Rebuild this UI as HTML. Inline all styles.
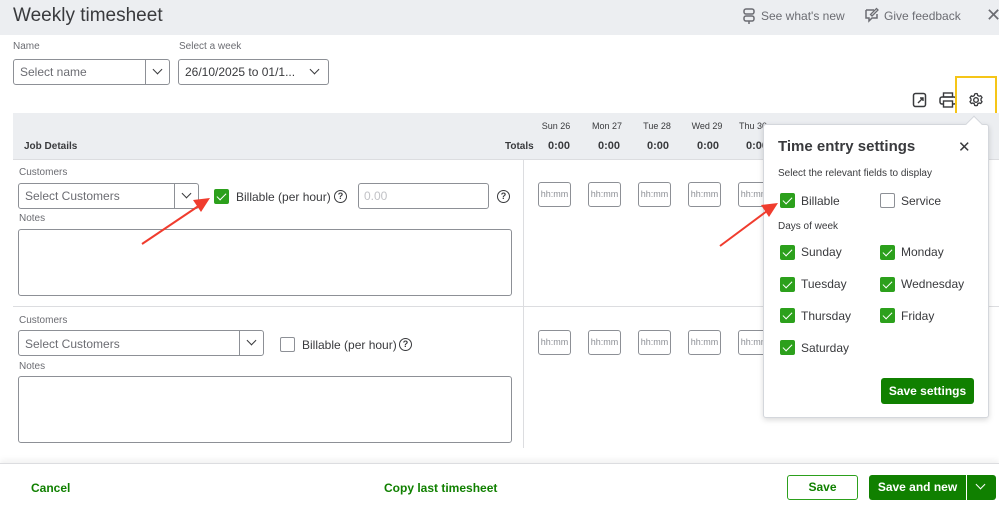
<!DOCTYPE html>
<html><head><meta charset="utf-8"><style>
*{box-sizing:border-box;margin:0;padding:0}
body{width:999px;height:508px;position:relative;overflow:hidden;background:#fff;font-family:"Liberation Sans",sans-serif;color:#393a3d}
.a{position:absolute}
.lbl{font-size:10px;color:#6b6c72}
.box{position:absolute;border:1px solid #8d9096;border-radius:3px;background:#fff}
.cb{position:absolute;width:15px;height:15px;border-radius:2px;background:#2ca01c;border:1px solid #2ca01c}
.cb::after{content:"";position:absolute;left:4px;top:1px;width:4px;height:8px;border:solid #fff;border-width:0 1.5px 1.5px 0;transform:rotate(45deg)}
.cbe{position:absolute;width:15px;height:15px;border-radius:2px;border:1px solid #8d9096;background:#fff}
.q{position:absolute;width:13px;height:13px;border:1.5px solid #393a3d;border-radius:50%;font-size:9px;font-weight:bold;text-align:center;line-height:10px}
.t{font-size:12px;color:#393a3d}
.hh{position:absolute;width:33px;height:25px;border:1px solid #8d9096;border-radius:3px;font-size:9px;color:#8d9096;text-align:center;line-height:23px;background:#fff}
.chev{position:absolute;width:7px;height:7px;border:solid #393a3d;border-width:0 1.5px 1.5px 0;transform:rotate(45deg)}
.day{font-size:9px;color:#393a3d;text-align:center;width:40px}
.tot{font-size:11px;font-weight:bold;text-align:center;width:40px}
.pl{font-size:12px;color:#393a3d}
</style></head><body>
<div class="a" style="left:0;top:0;width:999px;height:35px;background:#eceef1"></div>
<div class="a" style="left:13px;top:5px;font-size:19px;color:#393a3d">Weekly timesheet</div>
<svg class="a" style="left:742px;top:8px" width="14" height="16" viewBox="0 0 14 16"><rect x="2" y="1" width="10" height="5" rx="2" fill="none" stroke="#6b6c72" stroke-width="1.5"/><rect x="2" y="8" width="10" height="5" rx="2" fill="none" stroke="#6b6c72" stroke-width="1.5"/><path d="M7 13v3" stroke="#6b6c72" stroke-width="1.5"/></svg>
<div class="a" style="left:761px;top:9px;font-size:12px;color:#6b6c72">See what's new</div>
<svg class="a" style="left:864px;top:7px" width="16" height="16" viewBox="0 0 16 16"><path d="M2 3h8M2 3v8h3v3l3-3h5V7" fill="none" stroke="#6b6c72" stroke-width="1.5"/><path d="M8 9l6-6-1.5-1.5-6 6z" fill="none" stroke="#6b6c72" stroke-width="1.3"/></svg>
<div class="a" style="left:884px;top:9px;font-size:12px;color:#6b6c72">Give feedback</div>
<div class="a" style="left:986px;top:5px;font-size:18px;color:#6b6c72">✕</div>

<div class="a lbl" style="left:13px;top:41px">Name</div>
<div class="a lbl" style="left:179px;top:41px">Select a week</div>
<div class="box" style="left:13px;top:59px;width:157px;height:26px"></div>
<div class="a" style="left:145px;top:60px;width:1px;height:24px;background:#8d9096"></div>
<div class="a t" style="left:20px;top:65px;color:#6b6c72">Select name</div>
<div class="chev" style="left:154px;top:66px"></div>
<div class="box" style="left:178px;top:59px;width:151px;height:26px"></div>
<div class="a t" style="left:185px;top:65px">26/10/2025 to 01/1...</div>
<div class="chev" style="left:311px;top:66px"></div>

<svg class="a" style="left:912px;top:92px" width="16" height="16" viewBox="0 0 16 16"><rect x="1.5" y="1.5" width="12" height="13" rx="2" fill="none" stroke="#393a3d" stroke-width="1.5"/><path d="M6 11l5-5M8 6h3v3" fill="none" stroke="#393a3d" stroke-width="1.4"/></svg>
<svg class="a" style="left:939px;top:92px" width="18" height="16" viewBox="0 0 18 16"><rect x="4.5" y="1" width="9" height="4" fill="none" stroke="#393a3d" stroke-width="1.4"/><rect x="1" y="5" width="16" height="7" rx="2" fill="none" stroke="#393a3d" stroke-width="1.5"/><rect x="4.5" y="9" width="9" height="6" fill="#fff" stroke="#393a3d" stroke-width="1.4"/></svg>
<svg class="a" style="left:968px;top:92px" width="16" height="16" viewBox="0 0 16 16"><circle cx="8" cy="8" r="2.3" fill="none" stroke="#393a3d" stroke-width="1.4"/><path d="M8 1.5l1.3.3.4 1.6 1.4.8 1.6-.5 1.3 1.8-1 1.3v1.6l1 1.3-1.3 1.8-1.6-.5-1.4.8-.4 1.6-1.3.3-1.3-.3-.4-1.6-1.4-.8-1.6.5-1.3-1.8 1-1.3V7l-1-1.3 1.3-1.8 1.6.5 1.4-.8.4-1.6z" fill="none" stroke="#393a3d" stroke-width="1.3"/></svg>
<div class="a" style="left:955px;top:76px;width:42px;height:48px;border:2px solid #f5c518"></div>

<div class="a" style="left:13px;top:113px;width:986px;height:46px;background:#eceef1"></div>
<div class="a" style="left:24px;top:141px;font-size:10px;font-weight:bold">Job Details</div>
<div class="a" style="left:505px;top:141px;font-size:10px;font-weight:bold">Totals</div>
<div class="a day" style="left:536px;top:121px">Sun 26</div>
<div class="a day" style="left:587px;top:121px">Mon 27</div>
<div class="a day" style="left:637px;top:121px">Tue 28</div>
<div class="a day" style="left:687px;top:121px">Wed 29</div>
<div class="a day" style="left:733px;top:121px">Thu 30</div>
<div class="a tot" style="left:539px;top:140px">0:00</div>
<div class="a tot" style="left:589px;top:140px">0:00</div>
<div class="a tot" style="left:638px;top:140px">0:00</div>
<div class="a tot" style="left:688px;top:140px">0:00</div>
<div class="a tot" style="left:737px;top:140px">0:00</div>
<div class="a" style="left:13px;top:159px;width:986px;height:1px;background:#dcdde0"></div>
<div class="a" style="left:523px;top:160px;width:1px;height:288px;background:#dcdde0"></div>
<div class="a" style="left:13px;top:306px;width:986px;height:1px;background:#dcdde0"></div>

<!-- row1 -->
<div class="a lbl" style="left:19px;top:167px">Customers</div>
<div class="box" style="left:18px;top:183px;width:181px;height:26px"></div>
<div class="a" style="left:174px;top:184px;width:1px;height:24px;background:#8d9096"></div>
<div class="a t" style="left:25px;top:189px;color:#6b6c72">Select Customers</div>
<div class="chev" style="left:183px;top:190px"></div>
<div class="cb" style="left:214px;top:189px"></div>
<div class="a t" style="left:236px;top:190px">Billable (per hour)</div>
<div class="q" style="left:334px;top:190px">?</div>
<div class="box" style="left:358px;top:183px;width:131px;height:26px"></div>
<div class="a t" style="left:364px;top:189px;color:#c1c2c6">0.00</div>
<div class="q" style="left:497px;top:190px">?</div>
<div class="a lbl" style="left:19px;top:213px">Notes</div>
<div class="box" style="left:18px;top:229px;width:494px;height:67px"></div>
<div class="hh" style="left:538px;top:182px">hh:mm</div>
<div class="hh" style="left:588px;top:182px">hh:mm</div>
<div class="hh" style="left:638px;top:182px">hh:mm</div>
<div class="hh" style="left:688px;top:182px">hh:mm</div>
<div class="hh" style="left:738px;top:182px">hh:mm</div>

<!-- row2 -->
<div class="a lbl" style="left:19px;top:315px">Customers</div>
<div class="box" style="left:18px;top:330px;width:246px;height:26px"></div>
<div class="a" style="left:239px;top:331px;width:1px;height:24px;background:#8d9096"></div>
<div class="a t" style="left:25px;top:337px;color:#6b6c72">Select Customers</div>
<div class="chev" style="left:248px;top:337px"></div>
<div class="cbe" style="left:280px;top:337px"></div>
<div class="a t" style="left:302px;top:338px">Billable (per hour)</div>
<div class="q" style="left:399px;top:338px">?</div>
<div class="a lbl" style="left:19px;top:361px">Notes</div>
<div class="box" style="left:18px;top:376px;width:494px;height:67px"></div>
<div class="hh" style="left:538px;top:330px">hh:mm</div>
<div class="hh" style="left:588px;top:330px">hh:mm</div>
<div class="hh" style="left:638px;top:330px">hh:mm</div>
<div class="hh" style="left:688px;top:330px">hh:mm</div>
<div class="hh" style="left:738px;top:330px">hh:mm</div>

<!-- footer -->
<div class="a" style="left:0;top:463px;width:999px;height:45px;background:#fff;border-top:1px solid #dcdde0;box-shadow:0 -3px 6px rgba(0,0,0,.06)"></div>
<div class="a" style="left:31px;top:481px;font-size:12px;font-weight:bold;color:#108000">Cancel</div>
<div class="a" style="left:384px;top:481px;font-size:12px;font-weight:bold;color:#108000">Copy last timesheet</div>
<div class="a" style="left:787px;top:475px;width:71px;height:25px;border:1.5px solid #2ca01c;border-radius:3px;font-size:12px;font-weight:bold;color:#108000;text-align:center;line-height:22px">Save</div>
<div class="a" style="left:869px;top:475px;width:97px;height:25px;background:#108000;border-radius:3px 0 0 3px;font-size:12px;font-weight:bold;color:#fff;text-align:center;line-height:25px">Save and new</div>
<div class="a" style="left:967px;top:475px;width:29px;height:25px;background:#108000;border-radius:0 3px 3px 0"></div>
<div class="chev" style="left:977px;top:481px;border-color:#fff"></div>

<!-- popover -->
<div class="a" style="left:763px;top:124px;width:226px;height:294px;background:#fff;border:1px solid #d4d7dc;border-radius:3px;box-shadow:0 2px 6px rgba(0,0,0,.15)"></div>
<div class="a" style="left:968px;top:118px;width:12px;height:12px;background:#fff;transform:rotate(45deg);border-left:1px solid #d4d7dc;border-top:1px solid #d4d7dc"></div>
<div class="a" style="left:778px;top:138px;font-size:15px;font-weight:bold">Time entry settings</div>
<div class="a" style="left:958px;top:138px;font-size:15px;color:#393a3d">✕</div>
<div class="a lbl" style="left:778px;top:168px;color:#393a3d">Select the relevant fields to display</div>
<div class="cb" style="left:780px;top:193px"></div><div class="a pl" style="left:801px;top:194px">Billable</div>
<div class="cbe" style="left:880px;top:193px"></div><div class="a pl" style="left:901px;top:194px">Service</div>
<div class="a lbl" style="left:778px;top:221px;color:#393a3d">Days of week</div>
<div class="cb" style="left:780px;top:245px"></div><div class="a pl" style="left:801px;top:245px">Sunday</div>
<div class="cb" style="left:880px;top:245px"></div><div class="a pl" style="left:901px;top:245px">Monday</div>
<div class="cb" style="left:780px;top:277px"></div><div class="a pl" style="left:801px;top:277px">Tuesday</div>
<div class="cb" style="left:880px;top:277px"></div><div class="a pl" style="left:901px;top:277px">Wednesday</div>
<div class="cb" style="left:780px;top:308px"></div><div class="a pl" style="left:801px;top:309px">Thursday</div>
<div class="cb" style="left:880px;top:308px"></div><div class="a pl" style="left:901px;top:309px">Friday</div>
<div class="cb" style="left:780px;top:340px"></div><div class="a pl" style="left:801px;top:341px">Saturday</div>
<div class="a" style="left:881px;top:378px;width:93px;height:26px;background:#108000;border-radius:3px;color:#fff;font-size:12px;font-weight:bold;text-align:center;line-height:26px">Save settings</div>

<!-- arrows -->
<svg class="a" style="left:0;top:0" width="999" height="508"><g stroke="#f03c2e" stroke-width="2" fill="#f03c2e"><line x1="142" y1="244" x2="200" y2="205"/><polygon points="210,198 193,200 201,212" stroke="none"/><line x1="720" y1="246" x2="767" y2="211"/><polygon points="778,203 761,205 769,217" stroke="none"/></g></svg>
</body></html>
